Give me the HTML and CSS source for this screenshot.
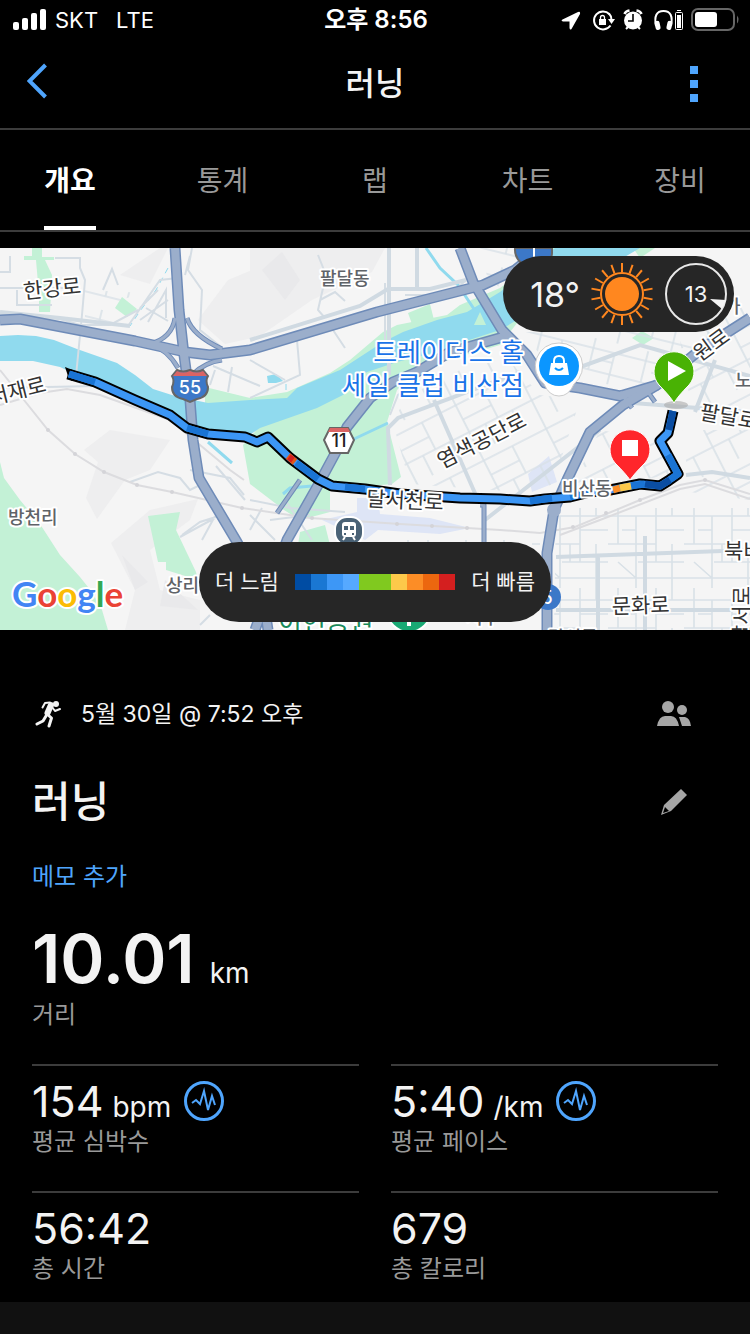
FILE: index.html
```html
<!DOCTYPE html>
<html lang="ko">
<head>
    <meta charset="UTF-8">
    <meta name="viewport" content="width=device-width, initial-scale=1.0">
    <title>러닝</title>
    <link rel="stylesheet" href="styles.css">
</head>
<body>
    <!-- Status bar -->
    <div class="status-bar">
        <div class="status-left">
            <svg width="34" height="22" viewBox="0 0 34 22" fill="#fff">
                <rect x="0" y="13" width="6" height="8" rx="2"/>
                <rect x="9" y="9" width="6" height="12" rx="2"/>
                <rect x="18" y="4" width="6" height="17" rx="2"/>
                <rect x="27" y="0" width="6" height="21" rx="2"/>
            </svg>
            <span class="carrier">SKT</span>
            <span>LTE</span>
        </div>
        <div class="status-time">오후 8:56</div>
        <div class="status-right">
            <svg width="178" height="26" viewBox="561 7 178 26">
                <path d="M562.500 19.500 L578 12 Q580.500 11 580 14 L571.500 29 Q570 30.500 569.500 28 L569.500 21.500 L563 21.500 Q560.500 20.800 562.500 19.500Z" fill="#fff"/>
                <path d="M609.500 14.200 A9 9 0 1 0 610.500 25.500" fill="none" stroke="#fff" stroke-width="2"/>
                <path d="M609 13.500 Q611.500 16 611.500 20" fill="none" stroke="#fff" stroke-width="2"/>
                <path d="M608 19 H615 L611.500 24Z" fill="#fff"/>
                <rect x="599" y="19" width="7" height="6" fill="#fff"/>
                <path d="M600.500 19 V17.500 A2 2 0 0 1 604.500 17.500 V19" fill="none" stroke="#fff" stroke-width="1.300"/>
                <circle cx="633" cy="20.500" r="9" fill="#fff"/>
                <path d="M633 14 V21 H628" fill="none" stroke="#000" stroke-width="1.600"/>
                <path d="M624.500 14 Q625.500 11 629.500 10.500 M641.500 14 Q640.500 11 636.500 10.500" stroke="#fff" stroke-width="2.500" fill="none"/>
                <path d="M628 27 L626 29 M638 27 L640 29" stroke="#fff" stroke-width="2"/>
                <path d="M656 26 Q653 11 663.500 11 Q674 11 671 26" fill="none" stroke="#fff" stroke-width="2"/>
                <rect x="655" y="21" width="5" height="9" rx="2" fill="#fff" transform="rotate(-12 657 25)"/>
                <rect x="667" y="21" width="5" height="9" rx="2" fill="#fff" transform="rotate(12 670 25)"/>
                <rect x="675.500" y="12.500" width="7" height="17" rx="1" fill="none" stroke="#fff"/>
                <rect x="677" y="10" width="4" height="1" fill="#fff"/>
                <rect x="677" y="15" width="4" height="13" fill="#fff"/>
                <rect x="692" y="9" width="42" height="21" rx="6" fill="none" stroke="#666" stroke-width="2"/>
                <rect x="695" y="12" width="22" height="15" rx="3" fill="#fff"/>
                <path d="M737 15.500 Q740 19.500 737 23.500Z" fill="#666"/>
            </svg>
        </div>
    </div>

    <!-- Title bar -->
    <header class="title-bar">
        <button class="back" aria-label="뒤로">
            <svg width="21" height="36" viewBox="0 0 21 36">
                <path d="M18.500 2 L2.500 18 L18.500 34" fill="none" stroke="#4fa5fd" stroke-width="4"/>
            </svg>
        </button>
        <h1>러닝</h1>
        <button class="more" aria-label="더보기">
            <span></span>
            <span></span>
            <span></span>
        </button>
    </header>

    <!-- Tabs -->
    <nav class="tabs">
        <a href="#" class="active">개요</a>
        <a href="#">통계</a>
        <a href="#">랩</a>
        <a href="#">차트</a>
        <a href="#">장비</a>
    </nav>

    <!-- Map -->
    <div class="map">
        <svg class="map-canvas" viewBox="0 248 750 382">
            <defs>
                <pattern id="streets" width="76" height="84" patternUnits="userSpaceOnUse">
                    <path d="M0 12H76 M0 40H48 M30 58H76 M0 74H76 M10 0V40 M28 12V84 M48 0V58 M64 40V84 M64 0V12 M10 58L28 74 M48 26H76 M14 26H28 M38 40V58" fill="none" stroke="#d9e1e7" stroke-width="1.600"/>
                </pattern>
                <pattern id="streets-tilt" width="70" height="62" patternUnits="userSpaceOnUse" patternTransform="rotate(-27)">
                    <path d="M0 10H70 M0 40H70 M12 0V62 M44 10V40 M60 40V62 M30 40V62 M12 26H44" fill="none" stroke="#d9e1e7" stroke-width="1.600"/>
                </pattern>
                <pattern id="streets-slant" width="54" height="46" patternUnits="userSpaceOnUse" patternTransform="rotate(14)">
                    <path d="M0 10H54 M0 32H54 M12 0V32 M34 10V46 M20 20H34" fill="none" stroke="#d9e1e7" stroke-width="1.600"/>
                </pattern>
            </defs>

            <rect x="0" y="248" width="750" height="382" fill="#f5f5f5"/>

            <!-- Hills -->
            <g fill="#eeeeef">
                <path d="M120 275L160 248H168L150 284Z"/>
                <path d="M250 248H385L372 272L312 300L260 336L250 338Z"/>
                <path d="M198 320L228 280L252 270V338L225 344Z"/>
                <path d="M86 498L98 462L84 450L110 430L170 440L150 470L125 480L97 519Z"/>
                <path d="M111 543L150 510L198 499L190 520L150 550L160 590L200 600V630H125L135 590Z"/>
            </g>
            <g fill="#e9e9eb">
                <path d="M262 270L282 252L300 280L285 300Z"/>
                <path d="M122 555L148 582L135 590Z"/>
                <path d="M165 580L198 610L160 606Z"/>
            </g>

            <!-- Parks -->
            <g fill="#c3f1d6">
                <path d="M0 462L4 478L20 500L40 524L60 555L80 577L92 592L102 610L108 630H0Z"/>
                <path d="M32 248H42V257H54V260H45L52 275L50 312H39V295L36 260H24V256H32Z"/>
                <path d="M122 297L137 309L127 317L115 308Z"/>
                <path d="M148 516L180 512L176 530L196 572L198 580L166 570L166 562H158Z"/>
                <path d="M205 387L250 398L287 392L330 373L350 360L383 332L397 325L447 315L460 305L500 288L552 248H575L500 345L397 375L343 400L290 420L205 405Z"/>
                <path d="M408 313L430 304L434 320L412 324Z"/>
                <path d="M243 445L262 424L317 408L343 395L397 362L430 358L397 390L387 422L401 477L392 484L330 490V512L300 520L284 510L250 484Z"/>
                <path d="M300 532L325 525L330 545H298Z"/>
                <path d="M632 338L642 331L654 338L643 345Z"/>
                <path d="M633 248H655L640 258Z"/>
            </g>

            <!-- River -->
            <g fill="#90daee">
                <path d="M0 336L18 335L36 336L54 340L77 349L117 363L135 375L153 389L175 396L208 403L250 400L287 398L297 388L340 370L383 342L403 332L437 320L467 312L500 292L555 248H640L500 330L463 342L437 352L397 362L367 372L343 395L317 408L260 428L245 438L195 430L130 398L90 381L60 367L33 361H0Z"/>
                <path d="M267 376L276 374L283 381L276 383H268Z"/>
                <path d="M480 312L486 325H474Z" fill="#c3f1d6"/>
            </g>
            <path d="M426 248L440 268L458 285L474 309 M354 439L388 423 M208 442L232 463 M283 494L290 488L312 486" fill="none" stroke="#90daee" stroke-width="3"/>
            <path d="M168 268L156 290L140 311L130 326 M286 384V395" fill="none" stroke="#90daee" stroke-dasharray="6 5"/>

            <!-- Stations and complexes -->
            <g fill="#dee5f6">
                <path d="M357 498L378 498L380 514L430 518L470 528L440 534L378 530L365 540L322 520L357 512Z"/>
                <path d="M528 474L549 456L557 482L532 492Z"/>
            </g>

            <!-- Local streets -->
            <path d="M556 508H750V630H554Z" fill="url(#streets)"/>
            <path d="M682 430H750V500L690 492Z" fill="url(#streets-tilt)"/>
            <path d="M392 420L410 395L500 350L540 395L580 400L550 494L410 484Z" fill="url(#streets-tilt)"/>
            <path d="M600 430L655 440L672 475L570 490Z" fill="url(#streets-tilt)"/>
            <path d="M520 332H735L655 375L640 390L560 376Z" fill="url(#streets-slant)"/>
            <path d="M400 540H540V570H400Z" fill="url(#streets)"/>
            <path d="M680 340L750 300V410L690 400Z" fill="url(#streets-tilt)"/>
            <path d="M480 248H520V300L488 280Z" fill="url(#streets-slant)"/>
            <path d="M85 290L145 293L120 300L115 325L85 318Z" fill="url(#streets-slant)"/>
            <g fill="none" stroke="#d5dde4" stroke-width="2">
                <path d="M0 288L80 288 M10 256V272H0 M17 290V305H52 M55 258H80V268L85 280L82 315L76 376 M103 290L112 269L118 285 M128 326L160 280L178 278 M140 308L158 290 M140 320L168 300 M146 308L168 321 M148 322L166 290V318 M192 248L188 270L202 290L200 330L220 346 M190 256L185 275 M250 398L300 375L297 340 M250 360L285 380 M318 255L326 275L318 310L325 318 M320 300L335 292L345 301 M333 330L345 348 M385 283L385 340"/>
                <path d="M0 314L60 319L80 325L110 325L138 310 M0 388L95 386 M215 370L210 385 M232 367L228 392 M213 366L260 386 M130 482L158 472L180 478L190 490L200 485 M190 470L230 478L244 495 M216 466L245 500 M182 535L200 522L222 515 M180 537L215 518 M215 516L202 540"/>
                <path d="M250 500L290 508L345 512 M250 515L275 540 M262 508L250 530 M270 520L310 515 M285 500L312 540"/>
                <path d="M200 625L210 615 M390 415L398 395L418 382 M405 295H450L466 280"/>
            </g>
            <g fill="none" stroke="#d0dae2" stroke-width="4">
                <path d="M0 312L60 318L130 326"/>
                <path d="M250 340L360 306L388 289L430 289L466 280 M389 248V375 M417 248V287"/>
                <path d="M390 485L388 428L398 418L520 372 M434 400L478 500"/>
                <path d="M545 380L640 345L750 376 M620 402L750 412 M695 412L715 360 M485 520L600 430"/>
                <path d="M556 557L750 550 M556 610H750 M598 556V630 M645 536V630 M686 475L712 472L750 478"/>
            </g>

            <!-- Railway -->
            <g fill="none" stroke="#dcdcdf" stroke-width="2">
                <path d="M0 405L40 393L67 389L100 395L170 420L230 470L244 480"/>
                <path d="M0 370L48 430L75 454L104 472L137 485L172 492L242 508L310 518L400 524L500 530L540 533L575 527L640 500L680 485L705 480L750 494"/>
                <path d="M560 535L600 520L680 489L705 484L750 499"/>
            </g>
            <g fill="#d4d4d8">
                <circle cx="48" cy="430" r="2"/><circle cx="75" cy="454" r="2"/><circle cx="104" cy="472" r="2"/>
                <circle cx="137" cy="485" r="2"/><circle cx="172" cy="492" r="2"/><circle cx="242" cy="508" r="2"/>
                <circle cx="312" cy="518" r="2"/><circle cx="397" cy="524" r="2"/><circle cx="432" cy="526" r="2"/>
                <circle cx="467" cy="528" r="2"/><circle cx="573" cy="527" r="2"/><circle cx="606" cy="513" r="2"/>
                <circle cx="640" cy="500" r="2"/><circle cx="705" cy="480" r="2"/>
            </g>

            <!-- Highways: dark casing first, then the fill -->
            <g fill="none" stroke-linejoin="round" stroke="#6e8bb8">
                <g stroke-width="5">
                    <path d="M150 344Q172 338 175 318 M187 318Q192 335 222 349 M150 344Q168 350 178 368 M222 360Q205 362 192 375"/>
                    <path d="M277 513L300 480 M480 505H484V548 M632 408L620 392 M655 402L645 388"/>
                </g>
                <g stroke-width="11">
                    <path d="M0 320L20 319L135 341L185 352L210 355L250 350L377 312L483 285L515 270L540 250"/>
                    <path d="M175 248L179 310L184 355L190 400L193 440L199 478L237 542L262 590L268 630"/>
                    <path d="M510 335L450 352L417 372L393 382L370 398L347 427L337 450L317 487L300 517L287 540L255 630"/>
                    <path d="M460 248L473 282L502 330L527 355L545 383L580 388L620 396L657 385L700 350L750 318"/>
                    <path d="M657 385L623 405L590 432L567 480L554 510L547 553V630"/>
                </g>
            </g>
            <g fill="none" stroke-linejoin="round" stroke="#9baecb">
                <g stroke-width="3">
                    <path d="M150 344Q172 338 175 318 M187 318Q192 335 222 349 M150 344Q168 350 178 368 M222 360Q205 362 192 375"/>
                    <path d="M277 513L300 480 M480 505H484V548 M632 408L620 392 M655 402L645 388"/>
                </g>
                <g stroke-width="8">
                    <path d="M0 320L20 319L135 341L185 352L210 355L250 350L377 312L483 285L515 270L540 250"/>
                    <path d="M175 248L179 310L184 355L190 400L193 440L199 478L237 542L262 590L268 630"/>
                    <path d="M510 335L450 352L417 372L393 382L370 398L347 427L337 450L317 487L300 517L287 540L255 630"/>
                    <path d="M460 248L473 282L502 330L527 355L545 383L580 388L620 396L657 385L700 350L750 318"/>
                    <path d="M657 385L623 405L590 432L567 480L554 510L547 553V630"/>
                </g>
            </g>
            <circle cx="554" cy="510" r="7" fill="#9baecb"/>

            <!-- Running route -->
            <path d="M65 367L80 373L72 381L69 379Z" fill="#000"/>
            <g fill="none" stroke-linejoin="round">
                <path d="M68 374L95 382L135 400L170 415L187 428L208 434L245 437L257 442L268 437L290 458L318 479L332 486L365 489L400 494L460 498L500 499L530 501L545 499L570 497L590 492L610 490L640 484L660 486L668 481L678 474L660 441L668 433L673 411" stroke="#000" stroke-width="11"/>
                <path d="M69 374L95 382L135 400L170 415L187 428L208 434L245 437L257 442L268 437L290 458L318 479L332 486L365 489L400 494L460 498L500 499L530 501L545 499L570 497L590 492L610 490L640 484L660 486L668 481L678 474L660 441L668 433L673 411" stroke="#3c96f5" stroke-width="7"/>
                <path d="M69 374L95 382 M187 428L208 434 M296 463L318 479 M345 487L365 489 M530 501L552 498 M570 497L590 492 M630 486L645 484 M668 455L678 474L668 481" stroke="#1a74d4" stroke-width="7"/>
                <path d="M645 484L660 486L670 480 M673 411L669 430" stroke="#0a4da2" stroke-width="7"/>
                <path d="M613 490L620 488" stroke="#fc8d26" stroke-width="7"/>
                <path d="M620 488L631 486" stroke="#fdc94a" stroke-width="7"/>
                <path d="M288 456L295 462" stroke="#e3571a" stroke-width="7"/>
                <path d="M289 457L293 460" stroke="#d41f1f" stroke-width="6"/>
            </g>

            <!-- Place names -->
            <g class="road-label">
                <text x="24" y="299" transform="rotate(-6 24 299)">한강로</text>
                <text x="-9" y="405" transform="rotate(-14 -9 405)">서재로</text>
                <text x="366" y="506" transform="rotate(3 366 506)">달서천로</text>
                <text x="442" y="469" transform="rotate(-27 442 469)">염색공단로</text>
                <text x="699" y="419" transform="rotate(10 699 419)">팔달로</text>
                <text x="700" y="362" transform="rotate(-36 700 362)">원로</text>
                <text x="612" y="614" transform="rotate(-2 612 614)">문화로</text>
                <text x="724" y="558">북비산로</text>
                <text x="749" y="644" transform="rotate(-90 749 644)">달서로</text>
            </g>
            <g class="area-label">
                <text x="320" y="285">팔달동</text>
                <text x="8" y="524">방천리</text>
                <text x="562" y="495">비산동</text>
                <text x="166" y="592">상리동</text>
                <text x="735" y="387">노원동</text>
                <text x="724" y="313">가</text>
                <text x="548" y="644">달서동</text>
                <text x="466" y="624">서구</text>
            </g>
            <g class="shop-label">
                <text x="524" y="362" text-anchor="end">트레이더스 홀</text>
                <text x="524" y="395" text-anchor="end">세일 클럽 비산점</text>
            </g>
            <text class="park-label" x="278" y="631">이현공원</text>

            <!-- Road shields -->
            <path d="M515 248H552V253Q552 263 534 270Q514 263 515 248Z" fill="#3c78c8" stroke="#666" stroke-width="2"/>
            <path d="M534 248V257" stroke="#fff" stroke-width="2"/>
            <path d="M177 370Q183 373 190 370Q197 373 203 370L208 376Q205 381 208 387Q208 397 197 399L190 402L183 399Q172 397 172 387Q175 381 172 376Z" fill="#3c78c8" stroke="#666" stroke-width="2"/>
            <path d="M177 371Q183 374 190 371Q197 374 203 371L207 376H173Z" fill="#da6464"/>
            <text class="shield" x="190" y="394" fill="#fff">55</text>
            <path d="M330 428H348L354 440L348 453H330L324 440Z" fill="#fff" stroke="#666" stroke-width="2"/>
            <path d="M330 428H348L350 432H328Z" fill="#da6464"/>
            <text class="shield" x="339" y="447" fill="#222">11</text>
            <circle cx="548" cy="597" r="13" fill="#3c78c8"/>
            <text class="shield" x="547" y="604" fill="#fff">5</text>

            <!-- Train station -->
            <rect x="335" y="517" width="28" height="28" rx="12" fill="#4a6276" stroke="#fff" stroke-width="2"/>
            <rect x="342" y="522" width="14" height="15" rx="3" fill="#fff"/>
            <path d="M344 526H348V530H344Z M350 526H354V530H350Z M344 533H346V535H344Z M352 533H354V535H352Z" fill="#4a6276"/>
            <path d="M345 537L343 540M353 537L355 540" stroke="#fff" stroke-width="2"/>

            <!-- Park pin -->
            <circle cx="409" cy="610" r="23" fill="#fff"/>
            <circle cx="409" cy="610" r="21" fill="#19a974"/>
            <path d="M409 618V626" stroke="#fff" stroke-width="4"/>

            <!-- Shop pin -->
            <path d="M559 343A23 23 0 0 1 574 384Q569 396 559 396Q549 396 544 384A23 23 0 0 1 559 343Z" fill="#fff" stroke="#ccc"/>
            <circle cx="559" cy="366" r="20" fill="#0b96ff"/>
            <path d="M551 363H567L569 375H549Z" fill="#fff"/>
            <path d="M554 364V361Q554 356 559 356Q564 356 564 361V364" fill="none" stroke="#fff" stroke-width="2"/>
            <path d="M555 368Q559 372 563 368" fill="none" stroke="#0b96ff" stroke-width="2"/>

            <!-- Start and stop pins -->
            <ellipse cx="676" cy="405" rx="12" ry="4" fill="#aaa" opacity="0.600"/>
            <path d="M674 403Q670 396 659 385A20 20 0 1 1 689 385Q678 396 674 403Z" fill="#49b204" stroke="#fff" stroke-width="1"/>
            <path d="M668 361L686 371L668 381Z" fill="#fff"/>
            <path d="M630 480Q626 474 615 463A20 20 0 1 1 645 463Q634 474 630 480Z" fill="#ff262b" stroke="#fff" stroke-width="1"/>
            <rect x="622" y="440" width="16" height="16" fill="#fff"/>

            <text class="google" x="12" y="607"><tspan fill="#4285f4">G</tspan><tspan fill="#ea4335">o</tspan><tspan fill="#fbbc04">o</tspan><tspan fill="#4285f4">g</tspan><tspan fill="#34a853">l</tspan><tspan fill="#ea4335">e</tspan></text>
        </svg>

        <!-- Weather -->
        <div class="weather">
            <span class="temperature">18°</span>
            <svg width="62" height="62" viewBox="-31 -31 62 62">
                <circle r="17" fill="#ff871f"/>
                <circle r="21" fill="none" stroke="#ff871f" stroke-width="2"/>
                <g stroke="#ff871f" stroke-width="2">
                    <path d="M0 -22V-31M0 22V31"/>
                    <path d="M0 -22V-31M0 22V31" transform="rotate(20)"/>
                    <path d="M0 -22V-31M0 22V31" transform="rotate(40)"/>
                    <path d="M0 -22V-31M0 22V31" transform="rotate(60)"/>
                    <path d="M0 -22V-31M0 22V31" transform="rotate(80)"/>
                    <path d="M0 -22V-31M0 22V31" transform="rotate(100)"/>
                    <path d="M0 -22V-31M0 22V31" transform="rotate(120)"/>
                    <path d="M0 -22V-31M0 22V31" transform="rotate(140)"/>
                    <path d="M0 -22V-31M0 22V31" transform="rotate(160)"/>
                </g>
            </svg>
            <svg width="64" height="64" viewBox="-32 -32 64 64">
                <circle r="30" fill="none" stroke="#e8e8e8" stroke-width="2"/>
                <path d="M14 5L30 6L26 15Z" fill="#f5f5f5"/>
                <text class="wind" x="0" y="8">13</text>
            </svg>
        </div>

        <!-- Pace legend -->
        <div class="legend">
            <span>더 느림</span>
            <div class="scale">
                <i class="c1"></i><i class="c2"></i><i class="c3"></i><i class="c4"></i><i class="c5"></i>
                <i class="c5"></i><i class="c6"></i><i class="c7"></i><i class="c8"></i><i class="c9"></i>
            </div>
            <span>더 빠름</span>
        </div>
    </div>

    <!-- Activity details -->
    <main class="details">
        <div class="meta">
            <svg width="27" height="30" viewBox="35 699 27 30" fill="none" stroke="#f3f3f3" stroke-linecap="round" stroke-linejoin="round">
                <circle cx="56" cy="704" r="3" fill="#f3f3f3" stroke="none"/>
                <path d="M51 705L47.500 713" stroke-width="6"/>
                <path d="M47 714L51.500 718L49 726" stroke-width="3"/>
                <path d="M50 702.500L45 703L42.500 707.500" stroke-width="2"/>
                <path d="M52 707L55 711L60 709" stroke-width="2"/>
                <path d="M46 716L43 721L37 724" stroke-width="3"/>
            </svg>
            <span class="date">5월 30일 @ 7:52 오후</span>
            <button class="icon-button" aria-label="공개 범위">
                <svg width="34" height="26" viewBox="0 0 34 26" fill="#a6a6a6">
                    <circle cx="11" cy="6" r="6"/>
                    <circle cx="25" cy="9" r="5"/>
                    <path d="M0 25Q2 15 8 15H14Q20 15 22 25Z"/>
                    <path d="M22 16H28Q33 17 34 25H25Z"/>
                </svg>
            </button>
        </div>

        <div class="name-row">
            <h2>러닝</h2>
            <button class="icon-button" aria-label="이름 편집">
                <svg width="28" height="28" viewBox="0 0 28 28">
                    <path d="M21 1L27 7L11 23L1 27L4 17Z" fill="#a6a6a6"/>
                    <path d="M5 19L9 23L3 25Z" fill="#000"/>
                </svg>
            </button>
        </div>

        <a href="#" class="memo">메모 추가</a>

        <div class="distance"><strong>10.01</strong> <span>km</span></div>
        <div class="label">거리</div>

        <div class="stats">
            <div class="stat">
                <div class="value">154 <span>bpm</span>
                    <svg class="pulse" width="40" height="40" viewBox="0 0 40 40" fill="none" stroke="#4fa5fd">
                        <circle cx="20" cy="20" r="18.500" stroke-width="3"/>
                        <path d="M8 22L12 19L16 23L20 10L24 29L28 15L31 24" stroke-width="2"/>
                    </svg>
                </div>
                <div class="label">평균 심박수</div>
            </div>
            <div class="stat">
                <div class="value">5:40 <span>/km</span>
                    <svg class="pulse" width="40" height="40" viewBox="0 0 40 40" fill="none" stroke="#4fa5fd">
                        <circle cx="20" cy="20" r="18.500" stroke-width="3"/>
                        <path d="M8 22L12 19L16 23L20 10L24 29L28 15L31 24" stroke-width="2"/>
                    </svg>
                </div>
                <div class="label">평균 페이스</div>
            </div>
            <div class="stat">
                <div class="value">56:42</div>
                <div class="label">총 시간</div>
            </div>
            <div class="stat">
                <div class="value">679</div>
                <div class="label">총 칼로리</div>
            </div>
        </div>
    </main>
    <div class="section-gap"></div>
</body>
</html>
```

FILE: styles.css
```css
* {
    box-sizing: border-box;
}
body {
    margin: 0;
    min-height: 100vh;
    display: flex;
    flex-direction: column;
    background-color: #000;
    color: #f3f3f3;
    font-family: Inter, "Noto Sans CJK KR", sans-serif;
    font-size: 22px;
}
h1, h2 {
    margin: 0;
    font-weight: 500;
}
button {
    padding: 0;
    border: none;
    background: none;
    cursor: pointer;
}
a {
    text-decoration: none;
}
svg {
    display: block;
}

/* Status bar */
.status-bar {
    display: grid;
    grid-template-columns: 1fr auto 1fr;
    align-items: center;
    height: 40px;
    padding: 0 11px 0 13px;
    color: #fff;
}
.status-left {
    display: flex;
    align-items: center;
    gap: 8px;
}
.carrier {
    margin-right: 10px;
}
.status-time {
    font-size: 24px;
    font-weight: 600;
    line-height: 40px;
}
.status-right {
    justify-self: end;
}

/* Title bar */
.title-bar {
    display: grid;
    grid-template-columns: 1fr auto 1fr;
    align-items: center;
    height: 90px;
    border-bottom: 2px solid #3c3c3c;
}
.title-bar h1 {
    font-size: 32px;
    line-height: 48px;
}
.back {
    justify-self: start;
    margin: 0 0 6px 27px;
}
.more {
    justify-self: end;
    margin-right: 52px;
    display: flex;
    flex-direction: column;
    gap: 6px;
}
.more span {
    width: 8px;
    height: 8px;
    background-color: #4fa5fd;
}

/* Tabs */
.tabs {
    display: flex;
    justify-content: space-between;
    height: 102px;
    padding: 0 44px;
    border-bottom: 2px solid #3c3c3c;
}
.tabs a {
    min-width: 52px;
    padding-top: 2px;
    color: #999;
    font-size: 28px;
    line-height: 98px;
    text-align: center;
}
.tabs .active {
    color: #fff;
    font-weight: 600;
    border-bottom: 4px solid #fff;
}

/* Map */
.map {
    position: relative;
    margin-top: 16px;
}
.map-canvas {
    width: 100%;
    height: auto;
}
.map-canvas text {
    paint-order: stroke;
    stroke: #fff;
    stroke-width: 4px;
    stroke-linejoin: round;
}
.road-label {
    font-size: 21px;
    fill: #333;
}
.area-label {
    font-size: 18px;
    font-weight: 500;
    fill: #5f6368;
}
.shop-label {
    font-size: 26px;
    fill: #1a73e8;
}
.park-label {
    font-size: 26px;
    fill: #188a5a;
}
.map-canvas .shield {
    font-size: 18px;
    font-weight: 500;
    text-anchor: middle;
    stroke: none;
}
.google {
    font-family: Lato, sans-serif;
    font-size: 35px;
    font-weight: 700;
}
.weather {
    position: absolute;
    top: 8px;
    right: 16px;
    display: flex;
    align-items: center;
    justify-content: flex-end;
    gap: 11px;
    width: 231px;
    height: 76px;
    padding-right: 6px;
    border-radius: 38px;
    background-color: #262626;
}
.temperature {
    font-size: 34px;
}
.map .wind {
    font-size: 22px;
    fill: #f3f3f3;
    text-anchor: middle;
}
.legend {
    position: absolute;
    bottom: 8px;
    left: 50%;
    transform: translateX(-50%);
    display: flex;
    align-items: center;
    justify-content: space-between;
    width: 352px;
    height: 80px;
    padding: 0 16px;
    border-radius: 40px;
    background-color: #262626;
    font-size: 21px;
    line-height: 24px;
    white-space: nowrap;
}
.scale {
    display: flex;
}
.scale i {
    width: 16px;
    height: 16px;
}
.c1 { background-color: #004ca3; }
.c2 { background-color: #1a77d3; }
.c3 { background-color: #3d97f6; }
.c4 { background-color: #56a9ff; }
.c5 { background-color: #80c91f; }
.c6 { background-color: #fdc94a; }
.c7 { background-color: #fc8d26; }
.c8 { background-color: #ec670f; }
.c9 { background-color: #d41f1f; }

/* Activity details */
.details {
    padding: 60px 32px 19px;
}
.meta {
    display: flex;
    align-items: center;
    height: 48px;
    padding-left: 3px;
}
.date {
    margin-left: 19px;
    font-size: 23px;
    line-height: 48px;
}
.icon-button {
    display: flex;
    justify-content: center;
    width: 34px;
    margin-left: auto;
    margin-right: 27px;
}
.name-row {
    display: flex;
    align-items: center;
    height: 64px;
    margin-top: 32px;
}
.name-row h2 {
    font-size: 42px;
    line-height: 64px;
}
.memo {
    display: block;
    width: fit-content;
    margin-top: 27px;
    color: #4fa5fd;
    font-size: 24px;
    line-height: 32px;
}
.distance {
    display: flex;
    align-items: baseline;
    gap: 15px;
    height: 80px;
    margin-top: 26px;
    font-size: 28px;
    line-height: 80px;
}
.distance strong {
    font-size: 67px;
    font-weight: 600;
}
.label {
    color: #999;
    font-size: 24px;
    line-height: 32px;
}
.stats {
    display: grid;
    grid-template-columns: 1fr 1fr;
    gap: 35px 32px;
    margin-top: 33px;
}
.stat {
    border-top: 2px solid #3c3c3c;
    padding-top: 8px;
}
.value {
    display: flex;
    align-items: baseline;
    gap: 9px;
    height: 54px;
    font-size: 43px;
    line-height: 54px;
}
.value span {
    font-size: 28px;
}
.pulse {
    align-self: center;
    margin-left: 4px;
}
.stat .label {
    line-height: 28px;
}
.section-gap {
    flex: 1;
    min-height: 32px;
    background-color: #111;
}
```
